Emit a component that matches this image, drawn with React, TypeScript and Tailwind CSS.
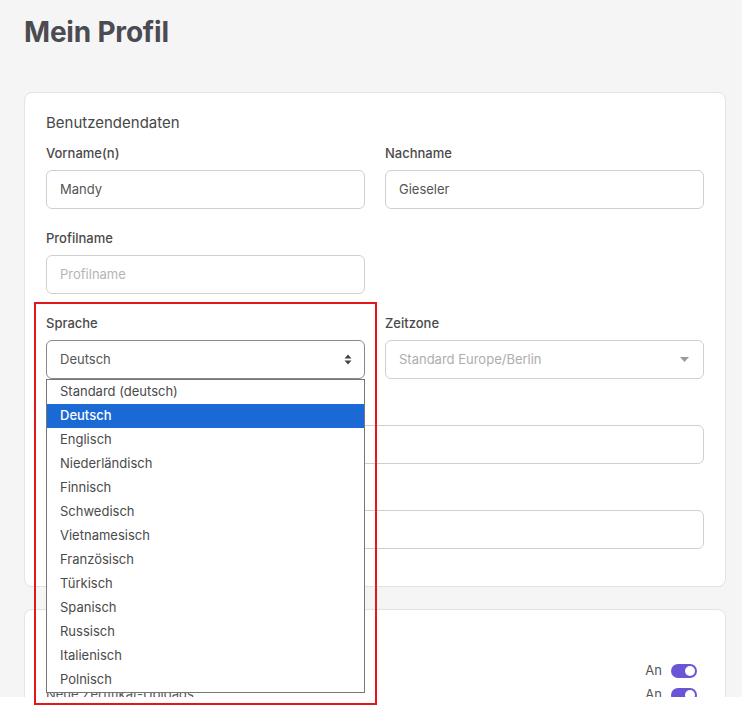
import type { ReactNode } from 'react'

const font = { fontFamily: 'Inter, "Noto Sans", sans-serif' }

const languages = [
  'Standard (deutsch)',
  'Deutsch',
  'Englisch',
  'Niederländisch',
  'Finnisch',
  'Schwedisch',
  'Vietnamesisch',
  'Französisch',
  'Türkisch',
  'Spanisch',
  'Russisch',
  'Italienisch',
  'Polnisch',
]

function Field({ label, children }: { label: string; children: ReactNode }) {
  return (
    <div className="flex flex-col">
      <label className="mb-2 text-[13px] leading-[17px] font-medium text-[#4a4a4a]">{label}</label>
      {children}
    </div>
  )
}

function TextInput({ value, placeholder }: { value?: string; placeholder?: string }) {
  return (
    <div className="flex h-[39px] items-center rounded-md border border-[#d0d0d0] bg-white px-[13px] text-[13px]">
      {value ? (
        <span className="text-[#555]">{value}</span>
      ) : (
        <span className="text-[#b5b5b5]">{placeholder}</span>
      )}
    </div>
  )
}

function Toggle() {
  return (
    <span className="flex h-[14px] w-[26px] items-center justify-end rounded-full bg-[#6c54d8] px-[2px]">
      <span className="h-[10px] w-[10px] rounded-full bg-white" />
    </span>
  )
}

export default function App() {
  return (
    <div className="relative h-[705px] w-[742px] bg-white" style={font}>
      <div className="h-[697px] overflow-hidden bg-[#f5f5f5] pl-6 pr-4 pt-[15px]">
        <h1 className="text-[28px] leading-[34px] font-bold tracking-[-0.2px] text-[#4b4b52]">Mein Profil</h1>

        <div className="mt-[43px] rounded-lg border border-[#e3e3e3] bg-white px-[21px] pt-[20px] pb-[37px]">
          <h2 className="text-[15px] leading-[20px] text-[#474747]">Benutzendendaten</h2>

          <div className="mt-3 grid grid-cols-2 gap-x-5 gap-y-[21px]">
            <Field label="Vorname(n)">
              <TextInput value="Mandy" />
            </Field>
            <Field label="Nachname">
              <TextInput value="Gieseler" />
            </Field>
            <Field label="Profilname">
              <TextInput placeholder="Profilname" />
            </Field>
            <div />
            <Field label="Sprache">
              <div className="relative">
                <div className="flex h-[39px] items-center justify-between rounded-md border border-[#8a8a8a] bg-white pl-[13px] pr-[12px] text-[13px] text-[#555]">
                  <span>Deutsch</span>
                  <svg width="8" height="11" viewBox="0 0 8 11" fill="#444">
                    <path d="M4 0.5 L7.5 4.5 H0.5 Z" />
                    <path d="M4 10.5 L7.5 6.5 H0.5 Z" />
                  </svg>
                </div>
                <ul className="absolute left-0 right-0 top-[39px] z-10 border border-[#767676] bg-white">
                  {languages.map((lang) => (
                    <li
                      key={lang}
                      className={`flex h-6 items-center px-[13px] text-[13px] ${
                        lang === 'Deutsch' ? 'bg-[#1a69d4] font-medium text-white' : 'text-[#4a4a4a]'
                      }`}
                    >
                      {lang}
                    </li>
                  ))}
                </ul>
              </div>
            </Field>
            <Field label="Zeitzone">
              <div className="flex h-[39px] items-center justify-between rounded-md border border-[#d0d0d0] bg-white pl-[13px] pr-[14px] text-[13px] text-[#adadad]">
                <span>Standard Europe/Berlin</span>
                <svg width="9" height="5" viewBox="0 0 9 5" fill="#9a9a9a">
                  <path d="M0 0 H9 L4.5 5 Z" />
                </svg>
              </div>
            </Field>
            <div className="col-span-2">
              <Field label="E-Mail">
                <TextInput value=" " />
              </Field>
            </div>
            <div className="col-span-2">
              <Field label="Telefon">
                <TextInput value=" " />
              </Field>
            </div>
          </div>
        </div>

        <div className="mt-[22px] rounded-lg border border-[#e3e3e3] bg-white pl-[21px] pr-[28px] pt-[20px]">
          <h2 className="text-[15px] leading-[20px] text-[#474747]">Benachrichtigungen</h2>
          <div className="mt-[9px] flex flex-col">
            <div className="flex h-6 items-center justify-between text-[13px] text-[#555]">
              <span>Neue Zertifikate</span>
              <span className="flex items-center gap-[9px]">
                An <Toggle />
              </span>
            </div>
            <div className="flex h-6 items-center justify-between text-[13px] text-[#555]">
              <span>Neue Zertifikat-Uploads</span>
              <span className="flex items-center gap-[9px]">
                An <Toggle />
              </span>
            </div>
          </div>
        </div>
      </div>

      <div className="pointer-events-none absolute left-[34px] top-[302px] h-[403px] w-[343px] border-2 border-[#e0181b]" />
    </div>
  )
}
